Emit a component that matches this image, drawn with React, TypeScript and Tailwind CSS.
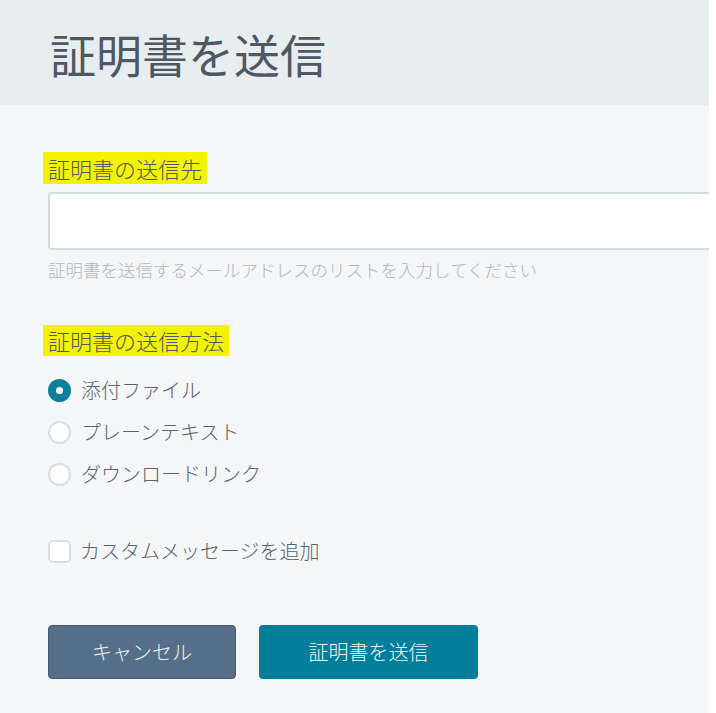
const font = { fontFamily: '"Noto Sans CJK JP", "Noto Sans", sans-serif' };

function Radio({ label, checked }: { label: string; checked?: boolean }) {
  return (
    <label className="flex h-[42px] items-center gap-[10px]">
      {checked ? (
        <span className="flex h-[23px] w-[23px] items-center justify-center rounded-full bg-[#0b7f9b]">
          <span className="h-[7px] w-[7px] rounded-full bg-white" />
        </span>
      ) : (
        <span className="h-[23px] w-[23px] rounded-full border-2 border-[#d6dee6] bg-white" />
      )}
      <span className="text-[20px] font-light text-[#59636d]">{label}</span>
    </label>
  );
}

export default function App() {
  return (
    <div className="h-[713px] w-[716px] bg-white" style={font}>
      <div className="h-[713px] w-[709px] overflow-hidden bg-[#f4f6f8]">
        <div className="flex h-[105px] items-center bg-[#e8edf0] px-[50px] pt-[1px]">
          <h1 className="text-[46px] leading-none text-[#4d5862]">証明書を送信</h1>
        </div>

        <div className="px-[48px]">
          <div className="mt-[47px]">
            <span className="-ml-[5px] inline-block h-[32px] bg-[#f3f300] px-[5px] text-[22px] font-light leading-[32px] text-[#4f5963]">
              証明書の送信先
            </span>
          </div>
          <div className="mt-[8px] h-[58px] w-[720px] rounded-[4px] border-2 border-[#d3dbe3] bg-white" />
          <p className="mt-[8px] text-[17.5px] font-light leading-[24px] text-[#b0b8bf]">
            証明書を送信するメールアドレスのリストを入力してください
          </p>

          <div className="mt-[43px]">
            <span className="-ml-[5px] inline-block h-[31px] bg-[#f3f300] px-[5px] text-[22px] font-light leading-[31px] text-[#4f5963]">
              証明書の送信方法
            </span>
          </div>
          <div className="mt-[13px] flex flex-col">
            <Radio label="添付ファイル" checked />
            <Radio label="プレーンテキスト" />
            <Radio label="ダウンロードリンク" />
          </div>

          <label className="mt-[35px] flex h-[42px] items-center gap-[9px]">
            <span className="h-[23px] w-[23px] rounded-[5px] border-2 border-[#d6dee6] bg-white" />
            <span className="text-[20px] font-light text-[#59636d]">カスタムメッセージを追加</span>
          </label>

          <div className="mt-[53px] flex gap-[23px]">
            <button
              type="button"
              className="h-[54px] w-[188px] rounded-[4px] border border-[#47596c] bg-[#566f89] text-[20px] font-light text-[#eef2f5]"
            >
              キャンセル
            </button>
            <button
              type="button"
              className="h-[54px] w-[219px] rounded-[4px] bg-[#017f9a] text-[20px] font-light text-[#eef6f8]"
            >
              証明書を送信
            </button>
          </div>
        </div>
      </div>
    </div>
  );
}
